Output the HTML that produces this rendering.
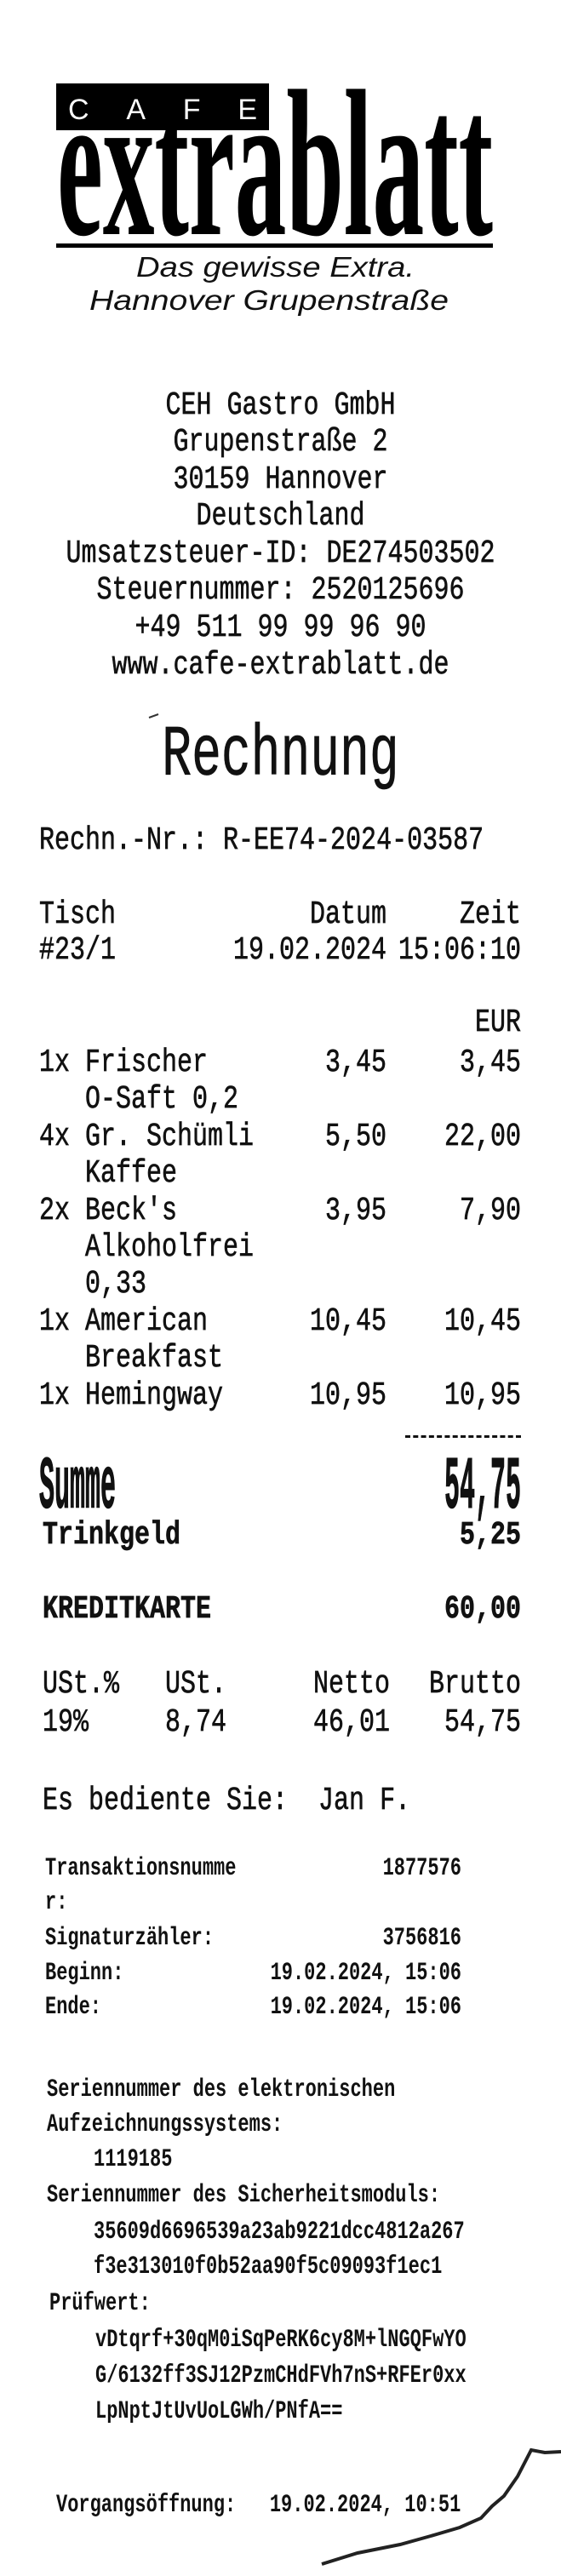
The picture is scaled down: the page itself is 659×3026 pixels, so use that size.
<!DOCTYPE html>
<html><head><meta charset="utf-8"><style>
html,body{margin:0;padding:0;background:#fff;}
body{width:659px;height:3026px;position:relative;overflow:hidden;}
.m{position:absolute;font-family:"Liberation Mono",monospace;font-size:30px;line-height:40px;height:40px;white-space:pre;color:#111;transform:scaleY(1.28);-webkit-text-stroke:0.5px #111;}
.b{font-weight:bold;}
.s{position:absolute;font-family:"Liberation Mono",monospace;font-size:22px;font-weight:bold;line-height:30px;height:30px;white-space:pre;color:#111;transform:scaleY(1.35);}
.c{left:0;width:659px;text-align:center;}
.r{right:47px;text-align:right;}
</style></head><body>
<svg width="659" height="420" style="position:absolute;left:0;top:0">
<rect x="66" y="98" width="250" height="55" fill="#000"/>
<text x="80" y="140" font-family="Liberation Sans" font-size="34" fill="#fff" textLength="222" lengthAdjust="spacing">CAFE</text>
<text x="67" y="275" font-family="Liberation Serif" font-weight="bold" font-size="246" fill="#000" textLength="512" lengthAdjust="spacingAndGlyphs">extrablatt</text>
<rect x="66" y="286" width="513" height="5" fill="#000"/>
<text x="160" y="325" font-family="Liberation Sans" font-style="italic" font-size="33" fill="#111" textLength="327" lengthAdjust="spacingAndGlyphs">Das gewisse Extra.</text>
<text x="105" y="364" font-family="Liberation Sans" font-style="italic" font-size="33" fill="#111" textLength="422" lengthAdjust="spacingAndGlyphs">Hannover Grupenstraße</text>
</svg>

<div class="m c" style="top:457px">CEH Gastro GmbH</div>
<div class="m c" style="top:500px">Grupenstraße 2</div>
<div class="m c" style="top:544px">30159 Hannover</div>
<div class="m c" style="top:587px">Deutschland</div>
<div class="m c" style="top:631px">Umsatzsteuer-ID: DE274503502</div>
<div class="m c" style="top:674px">Steuernummer: 2520125696</div>
<div class="m c" style="top:718px">+49 511 99 99 96 90</div>
<div class="m c" style="top:762px">www.cafe-extrablatt.de</div>

<div class="m c" style="top:859px;font-size:58px;line-height:60px;height:60px;transform:scaleY(1.45)">Rechnung</div>
<div class="m" style="top:968px;left:46px">Rechn.-Nr.: R-EE74-2024-03587</div>

<div class="m" style="top:1055px;left:46px">Tisch</div>
<div class="m" style="top:1055px;right:205px">Datum</div>
<div class="m r" style="top:1055px">Zeit</div>
<div class="m" style="top:1097px;left:46px">#23/1</div>
<div class="m" style="top:1097px;right:205px">19.02.2024</div>
<div class="m r" style="top:1097px">15:06:10</div>

<div class="m r" style="top:1182px">EUR</div>
<div class="m" style="top:1229px;left:46px">1x Frischer</div>
<div class="m" style="top:1229px;right:205px">3,45</div>
<div class="m r" style="top:1229px">3,45</div>
<div class="m" style="top:1272px;left:46px">   O-Saft 0,2</div>
<div class="m" style="top:1316px;left:46px">4x Gr. Schümli</div>
<div class="m" style="top:1316px;right:205px">5,50</div>
<div class="m r" style="top:1316px">22,00</div>
<div class="m" style="top:1359px;left:46px">   Kaffee</div>
<div class="m" style="top:1403px;left:46px">2x Beck's</div>
<div class="m" style="top:1403px;right:205px">3,95</div>
<div class="m r" style="top:1403px">7,90</div>
<div class="m" style="top:1446px;left:46px">   Alkoholfrei</div>
<div class="m" style="top:1489px;left:46px">   0,33</div>
<div class="m" style="top:1533px;left:46px">1x American</div>
<div class="m" style="top:1533px;right:205px">10,45</div>
<div class="m r" style="top:1533px">10,45</div>
<div class="m" style="top:1576px;left:46px">   Breakfast</div>
<div class="m" style="top:1620px;left:46px">1x Hemingway</div>
<div class="m" style="top:1620px;right:205px">10,95</div>
<div class="m r" style="top:1620px">10,95</div>
<div style="position:absolute;left:476px;top:1686px;width:136px;height:0;border-top:3px dashed #111"></div>

<div class="m b" style="top:1730px;left:46px;transform:scaleY(2.9)">Summe</div>
<div class="m b r" style="top:1730px;transform:scaleY(2.9)">54,75</div>
<div class="m b" style="top:1784px;left:50px">Trinkgeld</div>
<div class="m b r" style="top:1784px">5,25</div>
<div class="m b" style="top:1871px;left:50px">KREDITKARTE</div>
<div class="m b r" style="top:1871px">60,00</div>

<div class="m" style="top:1959px;left:50px">USt.%</div>
<div class="m" style="top:1959px;left:194px">USt.</div>
<div class="m" style="top:1959px;right:201px">Netto</div>
<div class="m r" style="top:1959px">Brutto</div>
<div class="m" style="top:2004px;left:50px">19%</div>
<div class="m" style="top:2004px;left:194px">8,74</div>
<div class="m" style="top:2004px;right:201px">46,01</div>
<div class="m r" style="top:2004px">54,75</div>

<div class="m" style="top:2096px;left:50px">Es bediente Sie:  Jan F.</div>

<div class="s" style="top:2180px;left:53px">Transaktionsnumme</div>
<div class="s" style="top:2180px;right:117px">1877576</div>
<div class="s" style="top:2220px;left:53px">r:</div>
<div class="s" style="top:2262px;left:53px">Signaturzähler:</div>
<div class="s" style="top:2262px;right:117px">3756816</div>
<div class="s" style="top:2303px;left:53px">Beginn:</div>
<div class="s" style="top:2303px;right:117px">19.02.2024, 15:06</div>
<div class="s" style="top:2343px;left:53px">Ende:</div>
<div class="s" style="top:2343px;right:117px">19.02.2024, 15:06</div>

<div class="s" style="top:2440px;left:55px">Seriennummer des elektronischen</div>
<div class="s" style="top:2481px;left:55px">Aufzeichnungssystems:</div>
<div class="s" style="top:2522px;left:110px">1119185</div>
<div class="s" style="top:2564px;left:55px">Seriennummer des Sicherheitsmoduls:</div>
<div class="s" style="top:2607px;left:110px">35609d6696539a23ab9221dcc4812a267</div>
<div class="s" style="top:2648px;left:110px">f3e313010f0b52aa90f5c09093f1ec1</div>
<div class="s" style="top:2691px;left:58px">Prüfwert:</div>
<div class="s" style="top:2734px;left:112px">vDtqrf+30qM0iSqPeRK6cy8M+lNGQFwYO</div>
<div class="s" style="top:2776px;left:112px">G/6132ff3SJ12PzmCHdFVh7nS+RFEr0xx</div>
<div class="s" style="top:2818px;left:112px">LpNptJtUvUoLGWh/PNfA==</div>
<div class="s" style="top:2928px;left:66px">Vorgangsöffnung:   19.02.2024, 10:51</div>

<svg width="659" height="3026" style="position:absolute;left:0;top:0;pointer-events:none">
<path d="M378 3012 L420 2999 L470 2989 L506 2979 L540 2969 L565 2958 L578 2944 L592 2932 L608 2909 L624 2878 L640 2881 L659 2880" fill="none" stroke="#222" stroke-width="4"/>
<path d="M175 843 L186 839" stroke="#333" stroke-width="2"/>
</svg>
</body></html>
